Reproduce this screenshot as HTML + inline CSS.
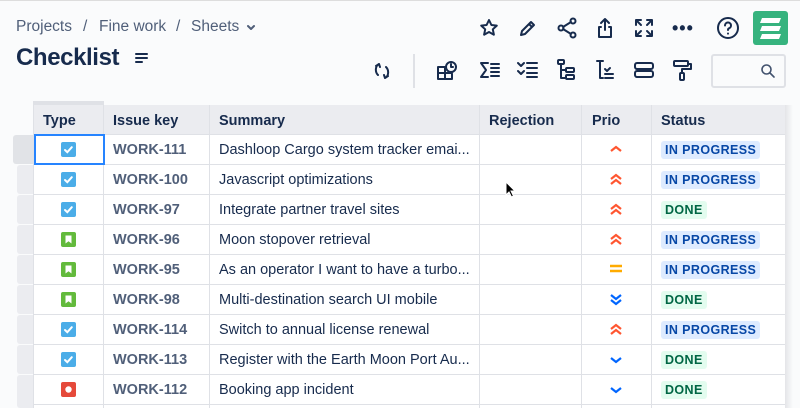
<!DOCTYPE html>
<html style="width:800px;height:408px;overflow:hidden"><head><meta charset="utf-8"><style>
*{margin:0;padding:0;box-sizing:border-box}
body{width:800px;height:408px;overflow:hidden;background:#fafbfc;font-family:"Liberation Sans",sans-serif;position:relative;color:#172b4d}
.a{position:absolute}
.crumb{position:absolute;top:18px;font-size:15.5px;color:#505f79;white-space:nowrap}
h1{position:absolute;left:16px;top:44px;font-size:24px;font-weight:bold;color:#172b4d;letter-spacing:-0.4px}
svg.i{position:absolute;fill:none;stroke:#172b4d;stroke-width:2;stroke-linecap:round;stroke-linejoin:round}
.grid{position:absolute;left:33px;top:105px;width:752px;height:303px;background:#fff}
.hdr{position:absolute;left:33px;top:105px;width:752px;height:30px;background:#ebecf0;border-bottom:1px solid #dfe1e6}
.hc{position:absolute;top:113px;font-size:14.5px;font-weight:bold;color:#172b4d}
.vl{position:absolute;top:105px;width:1px;height:303px;background:#dfe1e6}
.hl{position:absolute;left:33px;width:752px;height:1px;background:#dfe1e6}
.gut{position:absolute;left:17px;width:16px;height:29px;background:#ebecf0;border-radius:3px 0 0 3px}
.key{position:absolute;left:113px;font-size:14.5px;color:#505f79;font-weight:bold}
.sum{position:absolute;left:219px;font-size:14.5px;color:#172b4d}
.lz{position:absolute;left:661px;font-size:12.5px;font-weight:bold;padding:1px 4px;border-radius:3px;letter-spacing:0.4px;line-height:16px}
.ip{background:#deebff;color:#0747a6}
.dn{background:#e3fcef;color:#006644}
</style></head><body>
<div class="a" style="left:0;top:0;width:800px;height:1px;background:#ddd"></div>
<div class="crumb" style="left:16px">Projects</div>
<div class="crumb" style="left:83px">/</div>
<div class="crumb" style="left:99px">Fine work</div>
<div class="crumb" style="left:176px">/</div>
<div class="crumb" style="left:191px">Sheets</div>
<svg class="i" style="left:246px;top:24px;stroke:#505f79" width="10" height="8" viewBox="0 0 10 8"><path d="M2 2l3 3 3-3"/></svg>
<h1>Checklist</h1>
<svg class="i" style="left:135px;top:52px" width="14" height="12" viewBox="0 0 14 12"><path d="M1 2h11M1 6h11M1 10h6"/></svg>
<svg class="i" style="left:479px;top:18px" width="20" height="20" viewBox="0 0 20 20"><path d="M10 2l2.4 5 5.4.6-4 3.7 1.1 5.4L10 14l-4.9 2.7 1.1-5.4-4-3.7 5.4-.6z"/></svg>
<svg class="i" style="left:518px;top:18px" width="20" height="20" viewBox="0 0 20 20"><path d="M3 17l1-4 9-9 3 3-9 9zM11 6l3 3"/></svg>
<svg class="i" style="left:556px;top:17px" width="22" height="22" viewBox="0 0 22 22"><circle cx="5" cy="11" r="2.5"/><circle cx="17" cy="4" r="2.5"/><circle cx="17" cy="18" r="2.5"/><path d="M7 10l8-5M7 12l8 5"/></svg>
<svg class="i" style="left:595px;top:17px" width="20" height="22" viewBox="0 0 20 22"><path d="M10 13V2M6 6l4-4 4 4M6 10H4v10h12V10h-2"/></svg>
<svg class="i" style="left:634px;top:18px" width="20" height="20" viewBox="0 0 20 20"><path d="M2 7V2h5M13 2h5v5M18 13v5h-5M7 18H2v-5M3 3l4 4M17 3l-4 4M17 17l-4-4M3 17l4-4"/></svg>
<div class="a" style="left:672px;top:18px;font-size:18px;font-weight:bold;letter-spacing:1px">•••</div>
<svg class="i" style="left:716px;top:16px" width="24" height="24" viewBox="0 0 24 24"><circle cx="12" cy="12" r="10"/><path d="M9 9.5a3 3 0 1 1 4 2.8c-.8.4-1 1-1 1.7M12 17.5v.1"/></svg>
<div class="a" style="left:753px;top:11px;width:35px;height:34px;background:#36b37e;border-radius:3px"></div>
<svg class="a" style="left:757px;top:15px" width="27" height="26" viewBox="0 0 27 26"><g fill="#fff"><path d="M5 3h19l-2 5H3z"/><path d="M5 11h19l-2 5H3z"/><path d="M5 19h19l-2 5H3z"/></g></svg>
<svg class="i" style="left:372px;top:61px" width="20" height="20" viewBox="0 0 20 20"><path d="M7 3C3 5 3 11 6 14M4 5l3-2 1 3M13 17c4-2 4-8 1-11M16 15l-3 2-1-3"/></svg>
<div class="a" style="left:413px;top:54px;width:2px;height:34px;background:#dfe1e6"></div>
<svg class="i" style="left:436px;top:59px" width="24" height="22" viewBox="0 0 24 22"><path d="M9 8H2v12h14v-5M2 14h14M9 8v12"/><circle cx="15" cy="8" r="5"/><path d="M15 5v3h2"/></svg>
<svg class="i" style="left:479px;top:61px" width="22" height="18" viewBox="0 0 22 18"><path d="M9 2H2l5 7-5 7h7M12 3h8M12 7h8M12 11h8M12 15h8"/></svg>
<svg class="i" style="left:517px;top:60px" width="22" height="20" viewBox="0 0 22 20"><path d="M1 3l3 3 3-3M1 11l3 3 3-3M10 3h10M10 8h10M10 13h10M10 17h10"/></svg>
<svg class="i" style="left:556px;top:59px" width="20" height="22" viewBox="0 0 20 22"><rect x="2" y="1" width="6" height="4" rx="1"/><path d="M5 5v14h4M5 11h4"/><rect x="10" y="9" width="8" height="4" rx="1"/><rect x="10" y="16" width="8" height="4" rx="1"/></svg>
<svg class="i" style="left:595px;top:59px" width="20" height="22" viewBox="0 0 20 22"><path d="M2 2h6M5 2v17h3M10 10l2 2 3-3M10 15h8M10 19h8"/></svg>
<svg class="i" style="left:633px;top:62px" width="22" height="16" viewBox="0 0 22 16"><rect x="2" y="1" width="18" height="6" rx="2"/><rect x="2" y="9" width="18" height="6" rx="2"/></svg>
<svg class="i" style="left:672px;top:59px" width="22" height="22" viewBox="0 0 22 22"><rect x="2" y="2" width="14" height="5" rx="1"/><path d="M16 5h3v5h-9v4"/><rect x="8" y="14" width="4" height="7" rx="1"/></svg>
<div class="a" style="left:711px;top:54px;width:75px;height:34px;border:2px solid #dfe1e6;border-radius:3px;background:#fafbfc"></div>
<svg class="i" style="left:760px;top:63px;stroke:#42526e;stroke-width:1.6" width="16" height="16" viewBox="0 0 16 16"><circle cx="6.5" cy="6.5" r="4.5"/><path d="M10 10l4 4"/></svg>
<div class="grid"></div>
<div class="hdr"></div>
<div class="a" style="left:33px;top:101px;width:71px;height:4px;background:#dfe1e6"></div>
<div class="a" style="left:785px;top:105px;width:8px;height:303px;background:linear-gradient(90deg,#e4e5e8,#fafbfc)"></div>
<div class="hc" style="left:43px">Type</div>
<div class="hc" style="left:113px">Issue key</div>
<div class="hc" style="left:219px">Summary</div>
<div class="hc" style="left:489px">Rejection</div>
<div class="hc" style="left:592px">Prio</div>
<div class="hc" style="left:661px">Status</div>
<div class="vl" style="left:33px"></div><div class="vl" style="left:103px"></div><div class="vl" style="left:209px"></div><div class="vl" style="left:479px"></div><div class="vl" style="left:581px"></div><div class="vl" style="left:651px"></div>
<div class="hl" style="top:164px"></div><div class="hl" style="top:194px"></div><div class="hl" style="top:224px"></div><div class="hl" style="top:254px"></div><div class="hl" style="top:284px"></div><div class="hl" style="top:314px"></div><div class="hl" style="top:344px"></div><div class="hl" style="top:374px"></div><div class="hl" style="top:404px"></div>
<div class="gut" style="top:135px;left:13px;width:20px;background:#e1e3e7"></div>
<div class="gut" style="top:165px"></div><div class="gut" style="top:195px"></div><div class="gut" style="top:225px"></div><div class="gut" style="top:255px"></div><div class="gut" style="top:285px"></div><div class="gut" style="top:315px"></div><div class="gut" style="top:345px"></div><div class="gut" style="top:375px;height:33px"></div>
<div class="a" style="left:34px;top:134px;width:71px;height:31px;border:2px solid #2684ff"></div>

<svg width="0" height="0" style="position:absolute"><defs>
<g id="task"><rect width="15" height="15" rx="2" fill="#4bade8"/><path d="M4 8l2.3 2.2 4.5-5" stroke="#fff" stroke-width="2" fill="none" stroke-linecap="round"/></g>
<g id="story"><rect width="15" height="15" rx="2" fill="#63ba3c"/><path d="M4.5 3.5h6v8l-3-2.3-3 2.3z" fill="#fff"/></g>
<g id="bug"><rect width="15" height="15" rx="2" fill="#e5493a"/><circle cx="7.5" cy="7.5" r="3.2" fill="#fff"/></g>
<g id="high"><path d="M2 9l5-4 5 4" stroke="#ff5630" stroke-width="2.2" fill="none"/></g>
<g id="highest"><path d="M2 7l5-4 5 4M2 12l5-4 5 4" stroke="#ff5630" stroke-width="2.2" fill="none"/></g>
<g id="med"><path d="M1 4h12M1 9h12" stroke="#ffab00" stroke-width="2.4"/></g>
<g id="lowest"><path d="M2 2l5 4 5-4M2 7l5 4 5-4" stroke="#0065ff" stroke-width="2.2" fill="none"/></g>
<g id="low"><path d="M2 4l5 4 5-4" stroke="#0065ff" stroke-width="2.2" fill="none"/></g>
</defs></svg>

<svg class="a" style="left:61px;top:142px" width="15" height="15"><use href="#task"/></svg>
<svg class="a" style="left:61px;top:172px" width="15" height="15"><use href="#task"/></svg>
<svg class="a" style="left:61px;top:202px" width="15" height="15"><use href="#task"/></svg>
<svg class="a" style="left:61px;top:232px" width="15" height="15"><use href="#story"/></svg>
<svg class="a" style="left:61px;top:262px" width="15" height="15"><use href="#story"/></svg>
<svg class="a" style="left:61px;top:292px" width="15" height="15"><use href="#story"/></svg>
<svg class="a" style="left:61px;top:322px" width="15" height="15"><use href="#task"/></svg>
<svg class="a" style="left:61px;top:352px" width="15" height="15"><use href="#task"/></svg>
<svg class="a" style="left:61px;top:382px" width="15" height="15"><use href="#bug"/></svg>

<div class="key" style="top:142px">WORK-111</div><div class="sum" style="top:142px">Dashloop Cargo system tracker emai...</div>
<div class="key" style="top:172px">WORK-100</div><div class="sum" style="top:172px">Javascript optimizations</div>
<div class="key" style="top:202px">WORK-97</div><div class="sum" style="top:202px">Integrate partner travel sites</div>
<div class="key" style="top:232px">WORK-96</div><div class="sum" style="top:232px">Moon stopover retrieval</div>
<div class="key" style="top:262px">WORK-95</div><div class="sum" style="top:262px">As an operator I want to have a turbo...</div>
<div class="key" style="top:292px">WORK-98</div><div class="sum" style="top:292px">Multi-destination search UI mobile</div>
<div class="key" style="top:322px">WORK-114</div><div class="sum" style="top:322px">Switch to annual license renewal</div>
<div class="key" style="top:352px">WORK-113</div><div class="sum" style="top:352px">Register with the Earth Moon Port Au...</div>
<div class="key" style="top:382px">WORK-112</div><div class="sum" style="top:382px">Booking app incident</div>

<svg class="a" style="left:609px;top:142px" width="14" height="14"><use href="#high"/></svg>
<svg class="a" style="left:609px;top:172px" width="14" height="14"><use href="#highest"/></svg>
<svg class="a" style="left:609px;top:202px" width="14" height="14"><use href="#highest"/></svg>
<svg class="a" style="left:609px;top:232px" width="14" height="14"><use href="#highest"/></svg>
<svg class="a" style="left:609px;top:262px" width="14" height="14"><use href="#med"/></svg>
<svg class="a" style="left:609px;top:293px" width="14" height="14"><use href="#lowest"/></svg>
<svg class="a" style="left:609px;top:322px" width="14" height="14"><use href="#highest"/></svg>
<svg class="a" style="left:609px;top:354px" width="14" height="12"><use href="#low"/></svg>
<svg class="a" style="left:609px;top:384px" width="14" height="12"><use href="#low"/></svg>

<div class="lz ip" style="top:141px">IN PROGRESS</div>
<div class="lz ip" style="top:171px">IN PROGRESS</div>
<div class="lz dn" style="top:201px">DONE</div>
<div class="lz ip" style="top:231px">IN PROGRESS</div>
<div class="lz ip" style="top:261px">IN PROGRESS</div>
<div class="lz dn" style="top:291px">DONE</div>
<div class="lz ip" style="top:321px">IN PROGRESS</div>
<div class="lz dn" style="top:351px">DONE</div>
<div class="lz dn" style="top:381px">DONE</div>

<svg class="a" style="left:505px;top:181px" width="12" height="18" viewBox="0 0 12 18"><path d="M1 1v13l3-3 2.5 5 2-1-2.5-5h4z" fill="#000" stroke="#fff" stroke-width="1"/></svg>
</body></html>
